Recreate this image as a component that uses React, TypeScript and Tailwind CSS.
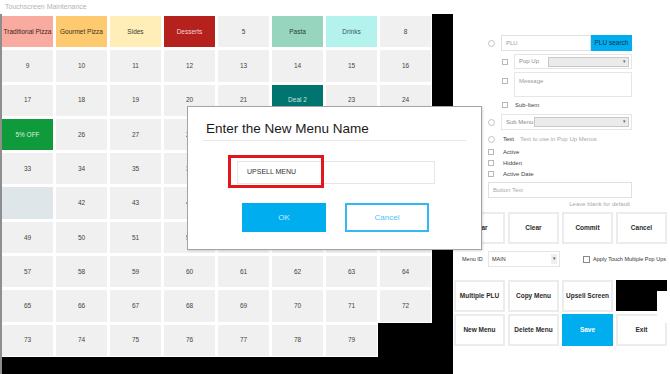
import React from 'react'

type Cell = { label: string; cls: string }

// Coloured category buttons; every other slot is a plain numbered key
const special: Record<number, Cell> = {
  1: { label: 'Traditional Pizza', cls: 'bg-[#f8ab9e] text-[#3a2420]' },
  2: { label: 'Gourmet Pizza', cls: 'bg-[#fdca70] text-[#3e3018]' },
  3: { label: 'Sides', cls: 'bg-[#ffeeb8] text-[#3e3a2a]' },
  4: { label: 'Desserts', cls: 'bg-[#b5221e] text-[#f4d2d0]' },
  6: { label: 'Pasta', cls: 'bg-[#98d5bf] text-[#24403a]' },
  7: { label: 'Drinks', cls: 'bg-[#b4f2ee] text-[#3a5258]' },
  22: { label: 'Deal 2', cls: 'bg-[#00756f] text-[#c6e4e1]' },
  25: { label: '5% OFF', cls: 'bg-[#0f9a3c] text-[#d8f1de]' },
  41: { label: '', cls: 'bg-[#dfe6e9]' },
}

const Radio = () => (
  <span className="block w-[7px] h-[7px] shrink-0 rounded-full border border-[#c4c4c4] bg-white" />
)

const Check = ({ cls = '' }: { cls?: string }) => (
  <span className={`block w-[6px] h-[6px] shrink-0 border border-[#b8b8b8] bg-white ${cls}`} />
)

const Select = () => (
  <div className="flex-1 h-[10px] flex items-center justify-end bg-[#ebebeb] border border-[#c8c8c8] px-[2px]">
    <span className="text-[5px] text-[#666]">▾</span>
  </div>
)

const Btn = ({ label, cls = 'bg-white border-2 border-[#ececec] text-[#2a2a2a]' }: { label: string; cls?: string }) => (
  <div className={`h-[32px] flex items-center justify-center whitespace-nowrap text-[6.5px] font-bold ${cls}`}>{label}</div>
)

export default function App() {
  const cells = Array.from({ length: 80 }, (_, i) => i + 1)

  return (
    <div className="relative w-[670px] h-[374px] overflow-hidden bg-white font-['Liberation_Sans',Arial,sans-serif]">
      {/* Title */}
      <div className="h-[14px] pl-[5px] flex items-center text-[7px] text-[#b4b4b4]">Touchscreen Maintenance</div>

      <div className="flex">
        {/* Button grid */}
        <div className="w-[453px] h-[360px] bg-black border-l-2 border-l-[#8e8e8e] flex items-start">
          <div className="bg-white pt-[2px] pr-px pb-px">
            <div className="grid grid-cols-[repeat(8,51px)] auto-rows-[31.3px] gap-[3px]">
              {cells.map((n) => {
                if (n === 80) return <div key={n} className="bg-black -m-[2px]" />
                const s = special[n]
                return (
                  <div
                    key={n}
                    className={`flex items-center justify-center whitespace-nowrap text-[6.5px] ${s ? s.cls : 'bg-[#f0f0f0] text-[#444]'}`}
                  >
                    {s ? s.label : n}
                  </div>
                )
              })}
            </div>
          </div>
        </div>

        {/* Editor panel */}
        <div className="flex-1 pt-[21px] text-[6px] text-[#444]">
          <div className="ml-[35px] w-[144px] flex flex-col">
            <div className="h-[16px] flex items-center">
              <Radio />
              <div className="ml-[6px] flex-1 h-full flex">
                <div className="flex-1 border border-[#e0e0e0] flex items-center px-[4px] text-[#9a9a9a]">PLU</div>
                <div className="w-[41px] bg-[#00aeef] flex items-center justify-center text-[6.5px] text-[#123047]">PLU search</div>
              </div>
            </div>

            <div className="mt-[3px] h-[15px] flex items-center">
              <Check cls="ml-[14px]" />
              <div className="ml-[6px] flex-1 h-full border border-[#e6e6e6] flex items-center pl-[4px] pr-[2px] gap-[4px]">
                <span className="w-[25px] whitespace-nowrap text-[#8a8a8a]">Pop Up</span>
                <Select />
              </div>
            </div>

            <div className="mt-[3px] h-[25px] flex items-start">
              <Check cls="ml-[14px] mt-[6px]" />
              <div className="ml-[6px] flex-1 h-full border border-[#e6e6e6] pl-[4px] pt-[4px] text-[#9a9a9a]">Message</div>
            </div>

            <div className="mt-[4px] h-[8px] flex items-center">
              <Check cls="ml-[14px]" />
              <span className="ml-[7px]">Sub-Item</span>
            </div>

            <div className="mt-[5px] h-[16px] flex items-center">
              <Radio />
              <div className="ml-[6px] flex-1 h-full border border-[#e6e6e6] flex items-center pl-[4px] pr-[2px] gap-[3px]">
                <span className="w-[25px] whitespace-nowrap text-[#8a8a8a]">Sub Menu</span>
                <Select />
              </div>
            </div>

            <div className="mt-[5px] h-[8px] flex items-center whitespace-nowrap">
              <Radio />
              <span className="ml-[8px] text-[#333]">Text</span>
              <span className="ml-[6px] text-[#a8a8a8]">Text to use in Pop Up Menus</span>
            </div>

            {['Active', 'Hidden', 'Active Date'].map((t, i) => (
              <div key={t} className={`${i === 0 ? 'mt-[5px]' : 'mt-[3px]'} h-[8px] flex items-center`}>
                <Check />
                <span className="ml-[9px]">{t}</span>
              </div>
            ))}

            <div className="mt-[4px] h-[16px] border border-[#e0e0e0] flex items-center px-[4px] text-[#a8a8a8]">Button Text</div>
            <div className="mt-[2px] pr-[2px] text-right text-[#a8a8a8]">Leave blank for default</div>
          </div>

          <div className="mt-[3px] ml-px w-[213px] grid grid-cols-4 gap-[3px]">
            <Btn label="Clear" />
            <Btn label="Clear" />
            <Btn label="Commit" />
            <Btn label="Cancel" />
          </div>

          <div className="mt-[7px] h-[16px] flex items-center whitespace-nowrap">
            <span className="ml-[9px] w-[26px] text-[5.5px] text-[#333]">Menu ID</span>
            <div className="w-[72px] h-full border border-[#e6e6e6] flex items-center justify-between pl-[3px] pr-[2px]">
              <span className="text-[5.5px] text-[#333]">MAIN</span>
              <span className="w-[6px] h-[10px] bg-[#efefef] flex items-center justify-center text-[5px] text-[#555]">▾</span>
            </div>
            <span className="ml-[23px] w-[7px] h-[7px] border border-[#888] bg-white" />
            <span className="ml-[3px] text-[5.5px] text-[#333]">Apply Touch Multiple Pop Ups</span>
          </div>

          <div className="mt-[13px] ml-px w-[213px] grid grid-cols-4 gap-x-[3px] gap-y-[2px]">
            <Btn label="Multiple PLU" />
            <Btn label="Copy Menu" />
            <Btn label="Upsell Screen" />
            <div className="h-[31px] bg-black" />
            <Btn label="New Menu" />
            <Btn label="Delete Menu" />
            <Btn label="Save" cls="bg-[#00aeef] text-white" />
            <Btn label="Exit" />
          </div>
        </div>
      </div>

      {/* Masked corner over the black tile */}
      <div className="absolute left-[657px] top-[291px] w-[13px] h-[32px] bg-white" />

      {/* Dialog */}
      <div className="absolute left-[187px] top-[106px] w-[295px] h-[144px] bg-white border border-[#a4a4a4] shadow-[1px_1px_2px_rgba(0,0,0,0.15)]">
        <div className="mx-[15px] pt-[14px] pb-[3px] border-b border-[#e8e8e8]">
          <div className="pl-[3px] h-[16px] leading-[16px] text-[13.5px] whitespace-nowrap text-[#1a1a1a]">Enter the New Menu Name</div>
        </div>
        <div className="mt-[20px] ml-[49px] w-[198px] h-[23px] border border-[#e6e6e6] flex items-center pl-[9px] text-[7px] text-[#333]">
          UPSELL MENU
        </div>
        <div className="mt-[19px] ml-[54px] flex gap-[19px]">
          <div className="w-[84px] h-[29px] bg-[#00aeef] flex items-center justify-center text-[8px] text-[#c8ecfb]">OK</div>
          <div className="w-[84px] h-[29px] border-2 border-[#33b9f1] flex items-center justify-center text-[8px] text-[#4cc3f3]">Cancel</div>
        </div>
        <div className="absolute left-[40px] top-[48px] w-[96px] h-[33px] border-[3px] border-[#e5151d]" />
      </div>
    </div>
  )
}
